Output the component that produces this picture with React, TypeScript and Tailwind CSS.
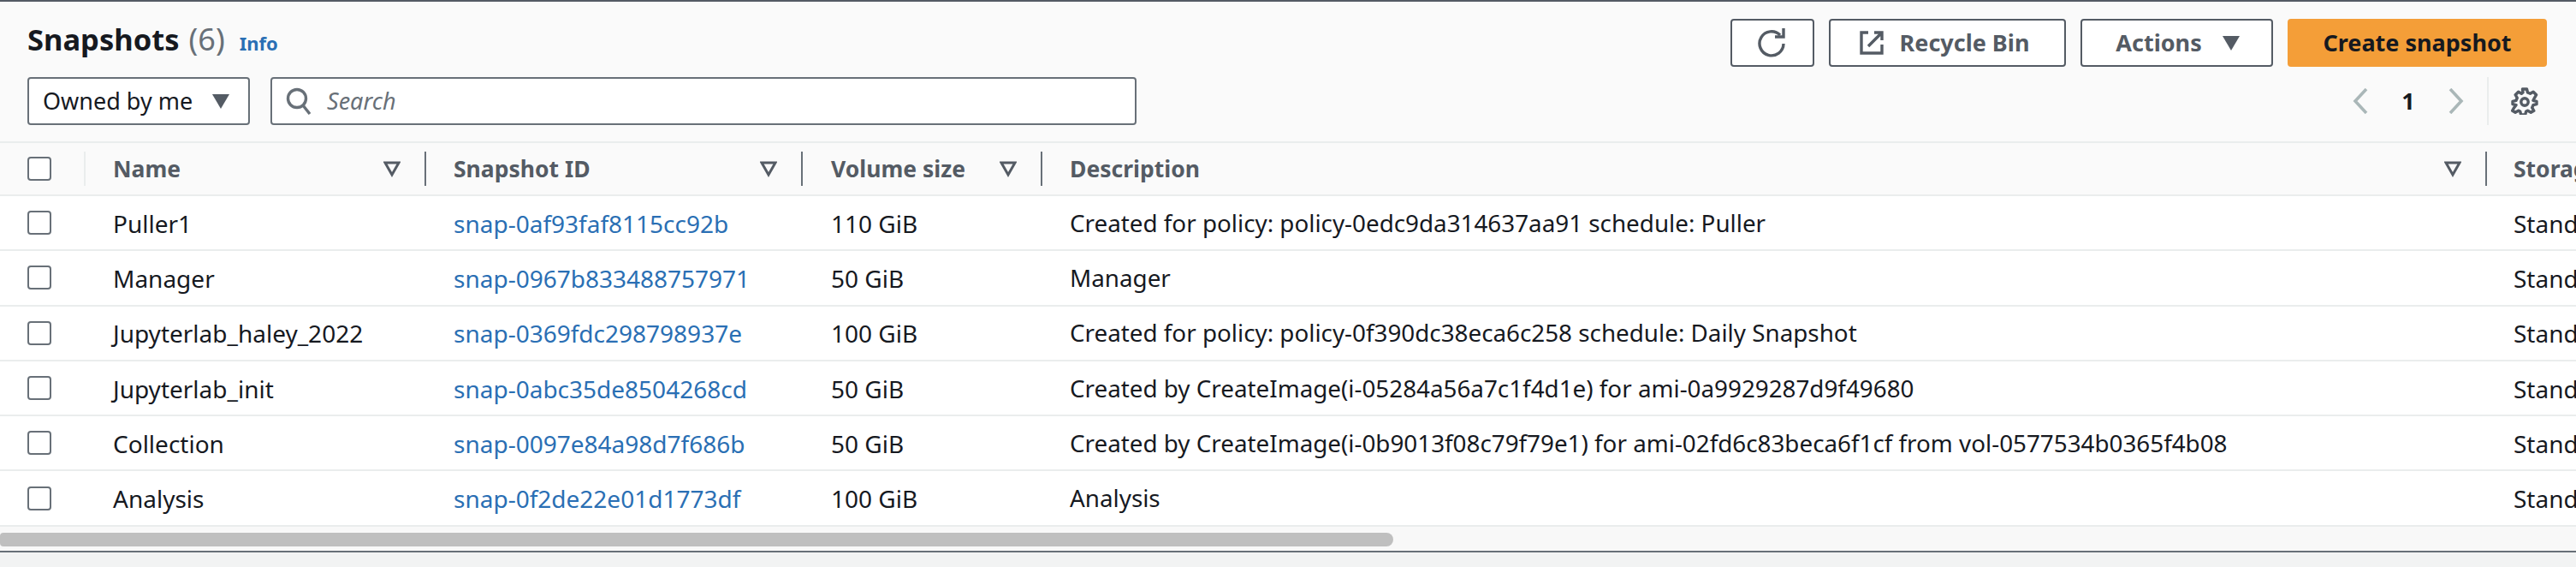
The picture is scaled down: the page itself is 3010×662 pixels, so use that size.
import React from 'react';

const ROWS = [
  { name: 'Puller1', id: 'snap-0af93faf8115cc92b', size: '110 GiB', desc: 'Created for policy: policy-0edc9da314637aa91 schedule: Puller' },
  { name: 'Manager', id: 'snap-0967b833488757971', size: '50 GiB', desc: 'Manager' },
  { name: 'Jupyterlab_haley_2022', id: 'snap-0369fdc298798937e', size: '100 GiB', desc: 'Created for policy: policy-0f390dc38eca6c258 schedule: Daily Snapshot' },
  { name: 'Jupyterlab_init', id: 'snap-0abc35de8504268cd', size: '50 GiB', desc: 'Created by CreateImage(i-05284a56a7c1f4d1e) for ami-0a9929287d9f49680' },
  { name: 'Collection', id: 'snap-0097e84a98d7f686b', size: '50 GiB', desc: 'Created by CreateImage(i-0b9013f08c79f79e1) for ami-02fd6c83beca6f1cf from vol-0577534b0365f4b08' },
  { name: 'Analysis', id: 'snap-0f2de22e01d1773df', size: '100 GiB', desc: 'Analysis' },
];

const Caret = () => (
  <svg viewBox="0 0 20 17" className="h-[17px] w-[20px] shrink-0">
    <path d="M0 0h20L10 17z" fill="#545b64" />
  </svg>
);

const FilterIcon = () => (
  <svg viewBox="0 0 20 20" className="h-[20px] w-[20px] shrink-0">
    <path d="M2 3h16L10 17z" fill="none" stroke="#545b64" strokeWidth="3" strokeLinejoin="miter" />
  </svg>
);

const Checkbox = () => <div className="h-[28px] w-[28px] rounded-[4px] border-2 border-[#687078] bg-white" />;

const HeaderCell = ({ label, className }: { label: string; className: string }) => (
  <div className={`flex h-[40px] shrink-0 items-center justify-between ${className}`}>
    <span className="pt-[2px]">{label}</span>
    <div className="flex items-center gap-[28px]">
      <FilterIcon />
      <div className="h-[40px] w-[2px] bg-[#687078]" />
    </div>
  </div>
);

const App: React.FC = () => {
  return (
    <div className="flex h-[662px] w-[3010px] flex-col overflow-hidden bg-[#f2f3f3] font-['Noto_Sans',sans-serif] text-[28px] text-[#16191f]">
      <div className="border-t-2 border-b-2 border-t-[#545b64] border-b-[#687078] bg-white">
        {/* Top section */}
        <div className="h-[163px] bg-[#fafafa] pl-[32px] pr-[34px]">
          <div className="flex items-start justify-between pt-[20px]">
            <div className="-mt-[3px] flex items-baseline">
              <h1 className="text-[34.5px] font-bold leading-[54px]">Snapshots</h1>
              <span className="ml-[11px] text-[36px] leading-[54px] text-[#687078]">(6)</span>
              <span className="ml-[17px] text-[22px] font-bold text-[#2a6fb4]">Info</span>
            </div>
            <div className="flex gap-[17px] text-[27px]">
              <button className="flex h-[56px] w-[98px] items-center justify-center rounded-[4px] border-2 border-[#545b64] bg-white">
                <svg viewBox="0 0 34 34" className="h-[34px] w-[34px]" fill="none" stroke="#545b64" strokeWidth="3.4">
                  <path d="M26 8A14 14 0 1 0 30 18" />
                  <path d="M20 10h10V0" />
                </svg>
              </button>
              <button className="flex h-[56px] w-[277px] items-center justify-center gap-[19px] rounded-[4px] border-2 border-[#545b64] bg-white pr-[7px] font-bold text-[#545b64]">
                <svg viewBox="0 0 28 28" className="h-[28px] w-[28px]" fill="none" stroke="#545b64" strokeWidth="3.4">
                  <path d="M10 2H2v24h24V16" />
                  <path d="M17 2h9v9M25 3 10 18" />
                </svg>
                Recycle Bin
              </button>
              <button className="flex h-[56px] w-[225px] items-center justify-center gap-[24px] rounded-[4px] border-2 border-[#545b64] bg-white pl-[2px] font-bold text-[#545b64]">
                Actions
                <Caret />
              </button>
              <button className="flex h-[56px] w-[303px] items-center justify-center rounded-[4px] bg-[#f49e38] font-bold text-[#16191f]">
                Create snapshot
              </button>
            </div>
          </div>
          <div className="mt-[12px] flex items-center justify-between text-[27px]">
            <div className="flex gap-[24px]">
              <div className="flex h-[56px] w-[260px] items-center justify-between rounded-[4px] border-2 border-[#687078] bg-white pl-[16px] pr-[22px]">
                <span>Owned by me</span>
                <Caret />
              </div>
              <div className="flex h-[56px] w-[1012px] items-center gap-[18px] rounded-[4px] border-2 border-[#687078] bg-white pl-[16px]">
                <svg viewBox="0 0 30 32" className="h-[32px] w-[30px]" fill="none" stroke="#687078" strokeWidth="3.4">
                  <circle cx="13" cy="13" r="10.5" />
                  <path d="M20 21l8 10" />
                </svg>
                <span className="italic text-[#687078]">Search</span>
              </div>
            </div>
            <div className="flex h-[56px] items-center">
              <svg viewBox="0 0 18 30" className="h-[30px] w-[18px]" fill="none" stroke="#aab7b8" strokeWidth="3.6">
                <path d="M16 1 3 15l13 14" />
              </svg>
              <span className="w-[94px] text-center font-bold">1</span>
              <svg viewBox="0 0 18 30" className="h-[30px] w-[18px]" fill="none" stroke="#aab7b8" strokeWidth="3.6">
                <path d="M2 1l13 14L2 29" />
              </svg>
              <div className="ml-[27px] h-[56px] w-[2px] bg-[#eaeded]" />
              <svg viewBox="0 0 32 32" className="ml-[26px] mr-[10px] h-[32px] w-[32px]" fill="none" stroke="#545b64" strokeWidth="3.4" strokeLinejoin="round">
                <path d="M13.5 2h5l1 4 3 1.3 3.6-2.1 3.5 3.5-2.1 3.6L26 15.300l4 1v3.400l-4 1-1.300 3 2.100 3.600-3.500 2-3.600-2.100-2 .8-1 3.900h-5l-1-3.900-2-.8-3.600 2.100-3.500-2 2.100-3.600L6 20.700l-4-1v-3.400l4-1 1.300-3-2.100-3.600 3.500-3.500 3.600 2.100 1.700-1.300z" />
                <circle cx="16" cy="17" r="4.200" />
              </svg>
            </div>
          </div>
        </div>

        {/* Column headers */}
        <div className="flex h-[64px] items-center border-y-2 border-[#eaeded] bg-[#fafafa] text-[26.5px] font-bold text-[#545b64]">
          <div className="flex h-[40px] w-[100px] shrink-0 items-center justify-between pl-[32px]">
            <Checkbox />
            <div className="h-[40px] w-[2px] bg-[#eaeded]" />
          </div>
          <HeaderCell label="Name" className="w-[398px] pl-[32px]" />
          <HeaderCell label="Snapshot ID" className="w-[440px] pl-[32px]" />
          <HeaderCell label="Volume size" className="w-[280px] pl-[33px]" />
          <HeaderCell label="Description" className="w-[1688px] pl-[32px]" />
          <div className="shrink-0 pl-[31px] pt-[2px]">Storage</div>
        </div>

        {/* Rows */}
        {ROWS.map((row) => (
          <div key={row.id} className="flex h-[64.3px] items-center border-b-2 border-[#eaeded] bg-white">
            <div className="w-[132px] shrink-0 pl-[32px]">
              <Checkbox />
            </div>
            <div className="w-[398px] shrink-0 pt-[1px]">{row.name}</div>
            <div className="w-[441px] shrink-0 pt-[1px] text-[#2a6fb4]">{row.id}</div>
            <div className="w-[279px] shrink-0 pt-[1px]">{row.size}</div>
            <div className="w-[1687px] shrink-0 whitespace-nowrap pt-[1px] text-[27.8px]">{row.desc}</div>
            <div className="shrink-0 pt-[1px]">Standard</div>
          </div>
        ))}

        {/* Horizontal scrollbar */}
        <div className="bg-[#f8f8f8] pt-[7px] pb-[5px]">
          <div className="h-[16px] w-[1628px] rounded-r-[8px] rounded-l-[4px] bg-[#bfbfbf]" />
        </div>
      </div>
    </div>
  );
};

export default App;
